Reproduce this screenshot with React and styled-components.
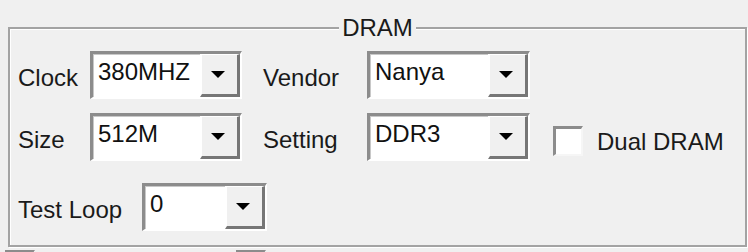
import React from "react";
import styled, { createGlobalStyle } from "styled-components";

const GlobalStyle = createGlobalStyle`
  html, body {
    margin: 0;
    padding: 0;
    background: #f0f0f0;
  }
  body {
    width: 748px;
    height: 252px;
    overflow: hidden;
    font-family: "Liberation Sans", Arial, sans-serif;
  }
`;

const Page = styled.div`
  padding-top: 14px;
`;

const Group = styled.fieldset`
  margin: 0 6px 0 8px;
  padding: 9px 8px 14px 8px;
  border: 2px solid #a3a3a3;
  box-shadow: inset 1px 1px 0 #ffffff, 1px 1px 0 #ffffff;
  display: flex;
  flex-direction: column;
`;

const Title = styled.legend`
  margin: 0 auto;
  padding: 0 3px;
  font-size: 24px;
  line-height: 28px;
  color: #1a1a1a;
  background: #f0f0f0;
`;

const Row = styled.div`
  display: flex;
  align-items: center;
  height: 48px;
  margin-top: ${(p) => p.$top || 0}px;
`;

const Label = styled.span`
  width: ${(p) => p.$w}px;
  margin-left: ${(p) => p.$ml || 0}px;
  padding-top: ${(p) => p.$pt ?? 5}px;
  flex: none;
  font-size: 24px;
  color: #1a1a1a;
  white-space: nowrap;
`;

const Combo = styled.div`
  width: ${(p) => p.$w}px;
  height: 48px;
  box-sizing: border-box;
  flex: none;
  display: flex;
  background: #ffffff;
  border-top: 3px solid #8c8c8c;
  border-left: 3px solid #8c8c8c;
  border-right: 2px solid #ffffff;
  border-bottom: 2px solid #ffffff;
  box-shadow: inset 1px 1px 0 #c8c8c8;
`;

const Value = styled.span`
  flex: 1;
  padding: 3px 0 0 5px;
  font-size: 24px;
  line-height: 30px;
  color: #111;
`;

const DropButton = styled.div`
  width: 40px;
  box-sizing: border-box;
  display: flex;
  align-items: center;
  justify-content: center;
  background: #f0f0f0;
  border-top: 1px solid #ffffff;
  border-left: 2px solid #ffffff;
  border-right: 3px solid #767676;
  border-bottom: 3px solid #767676;
`;

const Arrow = styled.span`
  width: 0;
  height: 0;
  margin-right: 3px;
  border-left: 7px solid transparent;
  border-right: 7px solid transparent;
  border-top: 7px solid #000;
`;

const Check = styled.span`
  width: 30px;
  height: 30px;
  box-sizing: border-box;
  flex: none;
  margin-left: ${(p) => p.$ml || 0}px;
  margin-top: ${(p) => p.$mt || 0}px;
  background: #ffffff;
  border-top: 3px solid #8c8c8c;
  border-left: 3px solid #8c8c8c;
  border-right: 2px solid #f6f6f6;
  border-bottom: 2px solid #f6f6f6;
`;

const BottomRow = styled.div`
  display: flex;
  padding: 3px 0 0 5px;
`;

function DropDown({ width, value }) {
  return (
    <Combo $w={width}>
      <Value>{value}</Value>
      <DropButton>
        <Arrow />
      </DropButton>
    </Combo>
  );
}

export default function App() {
  return (
    <Page>
      <GlobalStyle />
      <Group>
        <Title>DRAM</Title>
        <Row>
          <Label $w={72}>Clock</Label>
          <DropDown width={152} value="380MHZ" />
          <Label $w={104} $ml={21}>Vendor</Label>
          <DropDown width={163} value="Nanya" />
        </Row>
        <Row $top={14}>
          <Label $w={72}>Size</Label>
          <DropDown width={152} value="512M" />
          <Label $w={104} $ml={21}>Setting</Label>
          <DropDown width={163} value="DDR3" />
          <Check $ml={23} $mt={8} />
          <Label $w={140} $ml={14} $pt={9}>Dual DRAM</Label>
        </Row>
        <Row $top={22}>
          <Label $w={124}>Test Loop</Label>
          <DropDown width={125} value="0" />
        </Row>
      </Group>
      <BottomRow>
        <Check />
        <Check $ml={201} />
      </BottomRow>
    </Page>
  );
}
